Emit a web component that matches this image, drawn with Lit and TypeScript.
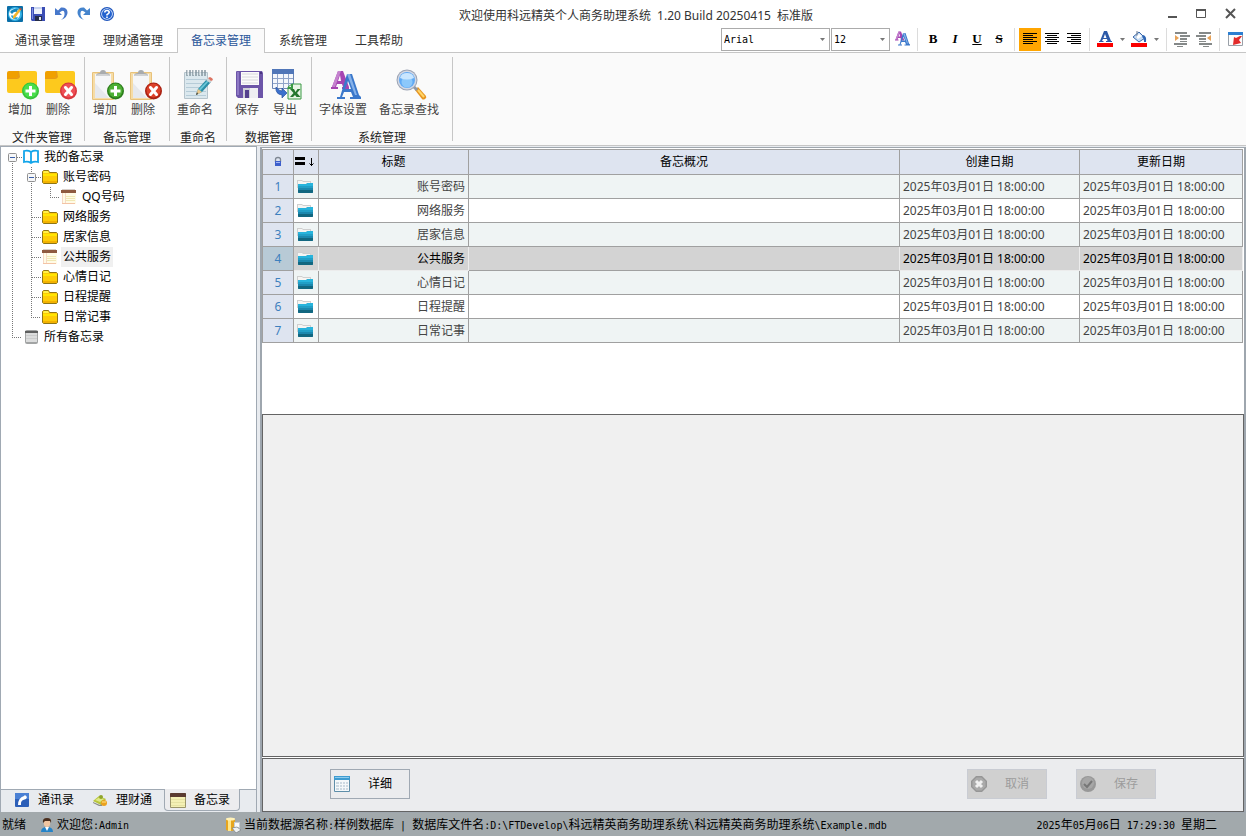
import { LitElement, html, svg, css, nothing } from "lit";
import { customElement, state } from "lit/decorators.js";
import { classMap } from "lit/directives/class-map.js";

type Art = ReturnType<typeof svg>;

const folder = svg`
  <path d="M0 4q0-2 2-2h9l4 3h0v6H0z" fill="#f0a000"/>
  <path d="M12 2h16q2 0 2 2v18q0 2-2 2H2q-2 0-2-2V9h9q2 0 3-2z" fill="#fdc91d"/>
  <path d="M12 2h-1v5q-1 2-2 2H0v1h10q2 0 3-2z" fill="#e79a17"/>`;
const board = svg`
  <rect x="0" y="3" width="22" height="28" rx="1" fill="#e8c27a"/>
  <rect x="1" y="4" width="20" height="26" fill="#f6dca6"/>
  <path d="M3 5h16v24H3z" fill="#f5f6f8"/>
  <path d="M3 29V14L17 29z" fill="#e6e8ec"/>
  <path d="M4 7q0-3 4-3 0-3 3-3t3 3q4 0 4 3z" fill="#a8abae"/>
  <path d="M4 7q0-2 4-2h6q4 0 4 2z" fill="#d0d2d4"/>`;
const plus = (a: string, b: string) => svg`
  <circle cx="23.500" cy="22" r="8.500" fill=${a}/><circle cx="23.500" cy="21.500" r="7" fill=${b}/>
  <path d="M18.500 22h10M23.500 17v10" stroke="#fff" stroke-width="3" fill="none"/>`;
const cross = (a: string, b: string) => svg`
  <circle cx="23.500" cy="22" r="8.500" fill=${a}/><circle cx="23.500" cy="21.500" r="7" fill=${b}/>
  <path d="M20.500 18.500l6 7M26.500 18.500l-6 7" stroke="#fff" stroke-width="3" fill="none" stroke-linecap="round"/>`;
const badged = (base: Art, badge: Art) => svg`<g transform="translate(3 0)">${base}${badge}</g>`;
const fontPair = svg`
  <path fill-rule="evenodd" d="M9 1h5l6 16v2h-7v-2h1l-1-3H8l-1 3h2v2H2v-2h1zM11 5L9 11h3z" fill="#a545b2"/>
  <path d="M9 1h3l-6 16H3z" fill="#c583cf"/>
  <path fill-rule="evenodd" d="M18 4h5l7 21 2 2v2h-11v-2h3l-2-5h-7l-2 5h3v2H8v-2h3zM19 11l-3 8h6z" fill="#3b78cb"/>
  <path d="M18 4h3l7 21h-2z" fill="#86b2ea"/>`;
const floppy = svg`
  <path d="M0 2q0-1 1-1h25l1 2v25H2l-2-2z" fill="#6c55a8"/>
  <path d="M1 2h2v23H1z" fill="#8d78c4"/>
  <path d="M5 2h18v13H5z" fill="#fbfbfb"/>
  <path d="M6 4h16M6 7h16M6 10h16M6 13h16" stroke="#d7d8dc"/>
  <path d="M7 18h15v10H7z" fill="#cfd0d8"/><path d="M14 18h8v10h-8z" fill="#eeeef2"/>
  <path d="M9 20h4v8H9z" fill="#55418e"/><path d="M24 2h2v2h-2z" fill="#493580"/>`;

const big: Record<string, Art> = {
  folderAdd: badged(folder, plus("#37c43a", "#4ade4c")),
  folderDel: badged(folder, cross("#d8363c", "#ee4f56")),
  noteAdd: badged(board, plus("#2c7d1c", "#4caf33")),
  noteDel: badged(board, cross("#a92213", "#dc4129")),
  rename: svg`<g transform="translate(2 0)">
    <rect x="3" y="3" width="24" height="27" rx="1" fill="#b5c3cb"/>
    <path d="M4 4h22v25H4z" fill="#dbe8ee"/>
    <path d="M5 10.500h20M5 14.500h20M5 18.500h20M5 22.500h20M5 26.500h20" stroke="#b6ccd8"/>
    <path d="M6 1v6M9 1v6M12 1v6M15 1v6M18 1v6M21 1v6M24 1v6" stroke="#84959f" stroke-width="1.500"/>
    <path d="M7 1v5M13 1v5M19 1v5" stroke="#f3f6f8"/>
    <path d="M15 26l2-6 9-10 4 3-9 10z" fill="#2b8fa8"/><path d="M18 20l9-9 1 1-9 10z" fill="#6cc7d8"/>
    <path d="M25 11l2-2 4 3-2 2z" fill="#cfd3d5"/><path d="M27 9l2-1q3 1 3 3l-2 1z" fill="#dc7463"/>
    <path d="M15 26l2-6 4 3z" fill="#ecc98e"/><path d="M15 26l1-3 1 2z" fill="#333"/></g>`,
  save: svg`<g transform="translate(5 1)">${floppy}</g>`,
  export: svg`<g transform="translate(1 0)">
    <path d="M2.500.5h21v19h-21z" fill="#f4f7fc" stroke="#6d86b5"/>
    <path d="M2 0h22v5H2z" fill="#5076b8"/>
    <path d="M3 9.500h20M3 14.500h20M7.500 5v15M13.500 5v15M18.500 5v15" stroke="#90a4c9"/>
    <path d="M18 18l4-3h9v15H18z" fill="#e9f5e6" stroke="#3a9a44"/>
    <path d="M18 19h4v-4" fill="none" stroke="#3a9a44" stroke-width="2"/>
    <path d="M20 20h4l1.500 3 2-3h3l-3.500 4 3.500 4h-4l-1.500-2-2 2h-3l3.500-4z" fill="#24772d"/>
    <path d="M6 18q-1 7 6 8v3l5-5-5-5v3q-3 0-6-4z" fill="#3b70cd" stroke="#2a519d" stroke-width=".7"/></g>`,
  fonts: svg`<g transform="translate(2 1)">${fontPair}</g>`,
  find: svg`<g transform="translate(1 0)">
    <path d="M21 21l3-3 8 9q1 2-1 3t-3 0z" fill="#e79521"/>
    <path d="M24 21l6 7" stroke="#ffd568" stroke-width="2"/>
    <path d="M19 17l4 4" stroke="#8f98a6" stroke-width="3"/>
    <circle cx="13" cy="11" r="10.500" fill="#9ba3b3"/><circle cx="13" cy="11" r="9.500" fill="#d3d8e4"/>
    <circle cx="13" cy="11" r="8" fill="#5fa9f5"/><circle cx="13" cy="13" r="5.500" fill="#8cc8fb"/>
    <path d="M6 9q1-5 7-5t7 5q-7 3-14 0z" fill="#c9e6ff"/></g>`,
};

const small: Record<string, Art> = {
  app: svg`
    <rect width="16" height="16" rx="1" fill="#0a6fa8"/><circle cx="8" cy="8" r="7" fill="#36b5e8"/>
    <circle cx="7.500" cy="8" r="5.500" fill="#fff"/><path d="M3 6q3-4 8-3l-1 3q-3-1-5 2z" fill="#1687bd"/>
    <path d="M4 10q2 4 6 3l1-2q-4 1-6-2z" fill="#2aa5da"/>
    <path d="M6 10l6-7 2 1-6 8-2 1z" fill="#f4b52c"/><path d="M12 3l1-1 2 1-1 1z" fill="#d84b2c"/>`,
  save: svg`
    <path d="M1 1h14v14H2l-1-1z" fill="#3b4db4"/><path d="M2 2h1v11H2z" fill="#7f8fe2"/>
    <path d="M4 1h8v7H4z" fill="#eef2fb"/><path d="M4 1h8v2H4z" fill="#c8d4f0"/>
    <path d="M5 10h7v5H5z" fill="#252d49"/><path d="M9 11h2v3H9z" fill="#dfe3ee"/>`,
  undo: svg`
    <path d="M2 2v7h7L6.500 6.500Q11 3 11.500 7T8 14q7-3 6.500-8T8 1.500L5 4.500z" fill="#4778cb"/>`,
  redo: svg`
    <path d="M14 2v7H7l2.500-2.500Q5 3 4.500 7T8 14Q1 11 1.500 6T8 1.500L11 4.500z" fill="#4584cd"/>`,
  help: svg`
    <circle cx="8" cy="8" r="7" fill="#1f56bd"/><circle cx="8" cy="8" r="5.800" fill="#e5efff"/>
    <circle cx="8" cy="8" r="5" fill="#2463cf"/>
    <path d="M5.800 6.500q0-2 2.200-2t2.200 1.800Q10 7.500 8 8.600v.9" stroke="#fff" stroke-width="1.600" fill="none"/>
    <path d="M7.200 10.500h1.600v1.500H7.200z" fill="#fff"/>`,
  fonts: svg`<g transform="scale(.5)">${fontPair}</g>`,
  left: svg`<path d="M1 2.500h14M1 4.500h10M1 6.500h14M1 8.500h10M1 10.500h14M1 12.500h10" stroke="#000"/>`,
  center: svg`<path d="M1 2.500h14M3 4.500h10M1 6.500h14M3 8.500h10M1 10.500h14M3 12.500h10" stroke="#000"/>`,
  right: svg`<path d="M1 2.500h14M5 4.500h10M1 6.500h14M5 8.500h10M1 10.500h14M5 12.500h10" stroke="#000"/>`,
  color: svg`
    <path fill-rule="evenodd" d="M7 0h3l4 10h1v1H9v-1h1.500L10 8H6l-1 2h1.500v1H2v-1h1zM8 3L6.500 7h3z" fill="#2c5aa8"/>
    <path d="M0 12h16v4H0z" fill="#fa0000"/>`,
  fill: svg`
    <path d="M2 6l6-5 6 6-6 4z" fill="#c6dcf4" stroke="#3a67a8"/><path d="M6 0v7" stroke="#6b7a90"/>
    <path d="M12 4q4 1 3 7h-2q0-4-2-5z" fill="#2e65b4"/><path d="M5 6l3-3 3 2-4 3z" fill="#fff"/>
    <path d="M0 12h16v4H0z" fill="#fa0000"/>`,
  indent: svg`
    <path d="M1 1h12v2H1zM6 4h10v2H6zM6 7h7v2H6zM6 10h7v1H6zM0 12h13v2H0zM3 15h6v1H3z" fill="#858989"/>
    <path d="M1 4l4 3-4 3z" fill="#e7a258"/>`,
  outdent: svg`
    <path d="M3 1h12v2H3zM0 4h10v2H0zM3 7h7v2H3zM3 10h7v1H3zM3 12h13v2H3zM7 15h6v1H7z" fill="#858989"/>
    <path d="M15 4l-4 3 4 3z" fill="#e7a258"/>`,
  jump: svg`
    <path d="M1.500 1.500h14v13h-14z" fill="#fdfdfd" stroke="#9aa0a8"/><path d="M1 1h15v3H1z" fill="#2d7fd1"/>
    <path d="M15 5l-3 4 2 3-8 2 1-8 2 1 4-2z" fill="#e22b2b"/>`,
  book: svg`
    <path d="M1 2q4-1 7 1 3-2 7-1v11q-4-1-7 1-3-2-7-1zM8 3v11" fill="#fff" stroke="#12a5ea" stroke-width="1.800"/>`,
  folder: svg`
    <path d="M.5 2.500l1-1h5l1 2h7l1 1v9l-1 1h-13l-1-1z" fill="#ffcb05" stroke="#8f7616"/>
    <path d="M1 5h14v2H1z" fill="#ffe600"/><path d="M2 2h4l1 2H1z" fill="#fff04a"/><path d="M1 12h14v2H1z" fill="#f2b200"/>`,
  note: svg`
    <path d="M1 3h14v12H1z" fill="#fffbe6"/><path d="M0 1h15v3H0z" fill="#8e5a40"/><path d="M1 0h13v1H1z" fill="#d8cfc9"/>
    <path d="M1.500 4v11M4.500 4v11" stroke="#f6d9c6"/><path d="M5 7.500h9M5 9.500h9M5 11.500h9" stroke="#f0e8b4"/>
    <path d="M1 14.500h13" stroke="#f4c4a6"/>`,
  all: svg`
    <rect x="2" y="1" width="13" height="14" rx="2" fill="#a2a4a4"/><path d="M3 4h11v9H3z" fill="#dcdddd"/>
    <path d="M2 2h13v2H2z" fill="#5e5f5f"/><path d="M3 6.500h11M3 9.500h11" stroke="#cbcccc"/>`,
  teal: svg`
    <path d="M0 1h5l1 1h8v7H0z" fill="#cfcfcf"/><path d="M1 2h4l1 1h7v7H1z" fill="#f5f5f3"/>
    <path d="M1 5h8l2-1h5v9q0 1-1 1H2q-1 0-1-1z" fill="#1c88ae"/><path d="M1 5h8l2-1h5v3H1z" fill="#28b4dc"/>
    <path d="M1 7h15v2H1z" fill="#229fc6"/><path d="M1 11h15v2q0 1-1 1H2q-1 0-1-1z" fill="#126780"/>`,
  lock: svg`
    <path d="M5.500 8V5.500q0-2 2.500-2t2.500 2V8" fill="none" stroke="#7e8793" stroke-width="1.300"/>
    <rect x="5" y="7" width="6" height="5" fill="#3d5fcb"/><path d="M6 8h4v1H6z" fill="#9fb4f4"/>`,
  phone: svg`
    <rect x="1" y="1" width="14" height="14" rx="1" fill="#2c5fb8"/><path d="M1 1h14v6H1z" fill="#4a80d4"/>
    <path d="M4 13q0-7 6-9l1-1 2 2-1 2q-5 1-5 4l0 2z" fill="#fff"/>`,
  money: svg`
    <path d="M1 9l6-5 7 3-5 6z" fill="#b7c53a"/><path d="M3 8l5-3 4 2-4 3z" fill="#dfe886"/><circle cx="9" cy="5" r="2" fill="#8fa52b"/>
    <path d="M1 10l7 3 3-2-1 3H7l-6-3z" fill="#8b8d84"/><circle cx="12" cy="11" r="3" fill="#eaa11d"/><path d="M10 10h4" stroke="#ffe58b"/>`,
  memo: svg`
    <rect y="1" width="16" height="15" rx="1" fill="#9b9569"/><path d="M1 5h14v10H1z" fill="#f4f0b4"/>
    <path d="M0 2q0-1 1-1h14q1 0 1 1v3H0z" fill="#5a3a30"/><path d="M1 7.500h14M1 10.500h14M1 13.500h14" stroke="#e6e2a2"/>`,
  user: svg`
    <path d="M2 15q0-5 6-5t6 5z" fill="#2483c8"/><path d="M6 10h4l-2 4z" fill="#fff"/>
    <ellipse cx="8" cy="6" rx="3.200" ry="4" fill="#f1c5a0"/><path d="M4 6q-1-5 4-5t4 5l-1-2H6z" fill="#4b2e1d"/>`,
  data: svg`
    <path d="M0 2h9v11q-4 2-9 0z" fill="#e6a51e"/><path d="M2 2h3v12H2z" fill="#ffe68a"/><ellipse cx="4.500" cy="2" rx="4.500" ry="1.500" fill="#fff2b8"/>
    <path d="M8 5h6v9H8z" fill="#c7cdd2"/><path d="M9 6h4v4H9z" fill="#f9fafa"/><path d="M6 11l5-1 4 3-5 3z" fill="#eef1f3" stroke="#777e83" stroke-width=".7"/>`,
  sheet: svg`
    <path d="M.5.5h15v15H.5z" fill="#f4f8fa" stroke="#5e8ea9"/><path d="M0 0h16v4H0z" fill="#3d9bd0"/><path d="M1 1h14v1H1z" fill="#8ccbee"/>
    <path d="M2 6h12v8H2z" fill="#cdd9e2"/><path d="M5.500 6v8M8.500 6v8M11.500 6v8M2 8.500h12M2 11.500h12" stroke="#f4f8fa"/>`,
  cancel: svg`
    <path d="M5 0h6l5 5v6l-5 5H5l-5-5V5z" fill="#969696"/><path d="M5.500 1.500h5l4 4v5l-4 4h-5l-4-4v-5z" fill="#aaa"/>
    <path d="M5 5l6 6M11 5l-6 6" stroke="#f0f0f0" stroke-width="3"/>`,
  ok: svg`
    <circle cx="8" cy="8" r="8" fill="#989898"/><circle cx="8" cy="7" r="6" fill="#a6a6a6"/>
    <path d="M4 8l3 3 5-6" stroke="#777" stroke-width="2" fill="none"/>`,
};

const icon = (name: string) => html`<svg class="i16" viewBox="0 0 16 16" aria-hidden="true">${small[name]}</svg>`;
const bigIcon = (name: string) => html`<svg class="i32" viewBox="0 0 32 32" aria-hidden="true">${big[name]}</svg>`;

/** Sets the Latin runs of a mixed string in the half-width face. */
const mixed = (text: string) =>
  text.split(/([\x20-\x7e]+)/).map((run) => (/^[\x20-\x7e]+$/.test(run) ? html`<span class="half">${run}</span>` : run));

const RIBBON = [
  { name: "文件夹管理", items: [["folderAdd", "增加"], ["folderDel", "删除"]] },
  { name: "备忘管理", items: [["noteAdd", "增加"], ["noteDel", "删除"]] },
  { name: "重命名", items: [["rename", "重命名"]] },
  { name: "数据管理", items: [["save", "保存"], ["export", "导出"]] },
  { name: "系统管理", items: [["fonts", "字体设置"], ["find", "备忘录查找"]] },
];

/** Guides, one letter per column: o/O root and inner expander, v line, t branch, l last branch. */
const TREE: [string, string, string][] = [
  ["o", "book", "我的备忘录"],
  ["vO", "folder", "账号密码"],
  ["vvl", "note", "QQ号码"],
  ["vt", "folder", "网络服务"],
  ["vt", "folder", "居家信息"],
  ["vt", "note", "公共服务"],
  ["vt", "folder", "心情日记"],
  ["vt", "folder", "日程提醒"],
  ["vl", "folder", "日常记事"],
  ["l", "all", "所有备忘录"],
];
const GUIDE: Record<string, string> = {
  o: "M9.500 14v6M14 10.500h6",
  O: "M9.500 0v6M9.500 14v6M14 10.500h6",
  v: "M9.500 0v20",
  t: "M9.500 0v20M10 10.500h10",
  l: "M9.500 0v10M9 10.500h11",
};

const TITLES = ["账号密码", "网络服务", "居家信息", "公共服务", "心情日记", "日程提醒", "日常记事"];
const STAMP = "2025年03月01日 18:00:00";

@customElement("app-root")
export class AppRoot extends LitElement {
  @state() private current = "公共服务";
  @state() private tab = "备忘录管理";

  static styles = css`
    :host {
      display: flex;
      flex-direction: column;
      height: 100vh;
      box-sizing: border-box;
      background: #fff;
      color: #000;
      font: 12px/16px "Noto Sans", "Noto Sans CJK SC", sans-serif;
      overflow: hidden;
    }
    * { box-sizing: border-box; }
    button, select, textarea { font: inherit; color: inherit; margin: 0; padding: 0; border: 0; background: none; border-radius: 0; }
    .i16 { width: 16px; height: 16px; flex: none; display: block; }
    .i32 { width: 32px; height: 32px; flex: none; display: block; overflow: visible; }
    .half { font: 10px/16px "DejaVu Sans Mono", monospace; white-space: pre; }

    .titlebar { display: flex; align-items: center; height: 28px; padding: 0 2px 0 4px; flex: none; }
    .quick { display: flex; gap: 7px; padding-left: 3px; }
    .title { flex: 1; margin: 0; padding-top: 3px; text-align: center; font: inherit; color: #333; white-space: pre; }
    .win { display: flex; }
    .win button { width: 29px; height: 26px; display: grid; place-items: center; }

    .bar { display: flex; height: 25px; flex: none; border-bottom: 1px solid #c6c6c6; }
    .menu { display: flex; padding-left: 1px; }
    .menu button { padding: 0 13px; border: 1px solid transparent; border-bottom: 0; height: 24px; color: #333; white-space: nowrap; }
    .menu .on { height: 25px; background: #fafafa; border-color: #c6c6c6; color: #2b579a; padding-bottom: 1px; }
    .format { display: flex; margin-left: auto; height: 23px; align-items: stretch; }
    .format select {
      appearance: none;
      border: 1px solid #ababab;
      margin-right: 1px;
      padding-left: 2px;
      font: 10px/16px "DejaVu Sans Mono", monospace;
      background: url("data:image/svg+xml,%3Csvg xmlns='http://www.w3.org/2000/svg' width='5' height='3'%3E%3Cpath d='M0 0h5L2.5 3z' fill='%23777'/%3E%3C/svg%3E") no-repeat right 4px center;
    }
    .family { width: 109px; }
    .size { width: 59px; }
    .format button { width: 22px; padding-bottom: 1px; display: grid; place-items: center; font: 700 13px/20px "Liberation Serif", serif; }
    .format .caret { width: 12px; }
    .format .on { background: #ffa500; }
    .format .italic { font-style: italic; }
    .format .under { text-decoration: underline; }
    .format .strike { text-decoration: line-through; }
    .sep { width: 1px; margin: 0 4px; background: #dcdcdc; }

    .ribbon { display: flex; height: 93px; padding: 4px 0; flex: none; background: #fafafa; border-bottom: 1px solid #c6c6c6; }
    .group { display: flex; flex-direction: column; justify-content: space-between; padding: 12px 7px 0 1px; border-right: 1px solid #c6c6c6; }
    .tools { display: flex; }
    .tools button { min-width: 38px; display: flex; flex-direction: column; align-items: center; color: #444; white-space: nowrap; }
    .tools span { padding: 1px 6px 0; }
    .caption { text-align: center; height: 11px; padding-left: 6px; color: #222; }

    .main { display: flex; flex: 1; min-height: 0; background: #e8ebef; border-bottom: 1px solid #a2a9ac; }
    .side { display: flex; flex-direction: column; width: 257px; flex: none; border: 1px solid #a0a9b3; border-bottom: 0; }
    .tree { flex: 1; margin: 0; padding: 0 0 0 2px; list-style: none; background: #fff; }
    .tree li { display: flex; height: 20px; align-items: center; }
    .guide { width: 19px; height: 20px; flex: none; }
    .tree .i16 { margin: 0 3px 0 1px; }
    .node { height: 20px; padding: 0 2px; }
    .node.on { background: #f0f0f0; }
    .pages { display: flex; height: 23px; flex: none; padding-left: 7px; background: linear-gradient(#a0a9b3, #a0a9b3) 0 0 / 100% 1px no-repeat #e8ebef; }
    .pages button { display: flex; align-items: center; gap: 8px; width: 78px; padding: 0 5px; height: 22px; border: 1px solid transparent; border-top: 0; white-space: nowrap; }
    .pages .on { width: 76px; background: #ececee; border-color: #a0a9b3; border-radius: 0 0 4px 4px; }

    .work {
      display: grid;
      grid-template-rows: 266px minmax(60px, 1fr) 55px;
      flex: 1;
      min-width: 0;
      margin: 1px 0 -1px 3px;
      border: solid #9ea6ae;
      border-width: 1px 2px;
      background: #fff;
    }
    .grid { padding: 1px 1px 0 0; overflow: hidden; }
    table { width: 100%; table-layout: fixed; border-spacing: 0; border: solid #a0a0a0; border-width: 1px 0 0 1px; }
    th, td { height: 24px; padding: 0 3px; border: solid #a0a0a0; border-width: 0 1px 1px 0; font-weight: 400; line-height: 16px; white-space: nowrap; overflow: hidden; }
    thead th { height: 25px; background: #dee4f0; text-align: center; }
    thead svg { display: block; margin: 0 auto; }
    .c-num { width: 31px; }
    .c-icon { width: 25px; }
    .c-title { width: 150px; }
    .c-made { width: 180px; }
    .c-mod { width: 163px; }
    td { color: #444; }
    tbody tr:nth-child(odd) td { background: #eff4f4; }
    tbody th { background: #dee4f0; color: #3d80be; }
    .mark .i16, .lock .i16 { margin: 0 auto; }
    .mark { padding: 0 2px 0 0; }
    .name { text-align: right; }
    tbody tr.on td { background: #d3d3d3; color: #000; border-color: #ececec; }
    tbody tr.on .memo { border-color: #a0a0a0; border-right-color: #ececec; }
    tbody tr.on th { background: #b8cad6; }

    textarea { display: block; width: 100%; height: 100%; resize: none; outline: 0; background: #f0f0f0; border: 1px solid #646464; }
    .actions { display: flex; align-items: center; gap: 29px; margin-top: 1px; padding: 0 87px 2px 67px; background: #ebecee; border: 1px solid #646464; }
    .actions button { display: flex; align-items: center; width: 80px; height: 30px; padding: 0 3px; gap: 18px; border: 1px solid #a0a9b3; }
    .actions button:disabled { background: #d0d0d0; border-color: #c9ccd3; color: #9c9c9c; }
    .push { margin-left: auto; }

    .status { display: flex; align-items: center; height: 23px; flex: none; padding: 1px 29px 0 2px; background: #a2a9ac; white-space: nowrap; }
    .status span.cell { display: flex; align-items: center; gap: 2px; }
    .ready { width: 37px; }
    .who { width: 187px; }
    .clock { margin-left: auto; }
  `;

  private tool(cls: string, label: string, body: unknown) {
    return html`<button class=${cls} aria-label=${label}>${body}</button>`;
  }

  private caret(label: string) {
    return this.tool("caret", label, html`<svg width="5" height="3" viewBox="0 0 5 3"><path d="M0 0h5L2.500 3z" fill="#777"/></svg>`);
  }

  private guide(kind: string) {
    const box = kind === "o" || kind === "O";
    return html`<svg class="guide" viewBox="0 0 19 20" aria-hidden="true">
      <path d=${GUIDE[kind]} stroke="#777" stroke-dasharray="1 1" fill="none" />
      ${box
        ? svg`<rect x="5.500" y="6.500" width="8" height="8" rx="1" fill="#f6f7f8" stroke="#919191"/><path d="M7 10.500h5" stroke="#3a5fa9"/>`
        : nothing}
    </svg>`;
  }

  private header() {
    return html`
      <header class="titlebar">
        <div class="quick">
          ${[["app", "程序菜单"], ["save", "保存"], ["undo", "撤销"], ["redo", "重做"], ["help", "帮助"]].map(([i, l]) => this.tool("", l, icon(i)))}
        </div>
        <h1 class="title">欢迎使用科远精英个人商务助理系统  1.20 Build 20250415  标准版</h1>
        <div class="win">
          ${this.tool("", "最小化", html`<svg width="12" height="12"><path d="M2 8h9v2H2z" fill="#555"/></svg>`)}
          ${this.tool("", "最大化", html`<svg width="12" height="12"><path d="M1.500 1.500h9v8h-9z" fill="none" stroke="#555"/><path d="M1 1h10v2H1z" fill="#555"/></svg>`)}
          ${this.tool("", "关闭", html`<svg width="12" height="12"><path d="M2 1l9 9M11 1l-9 9" stroke="#555" stroke-width="2"/></svg>`)}
        </div>
      </header>
      <div class="bar">
        <nav class="menu">
          ${["通讯录管理", "理财通管理", "备忘录管理", "系统管理", "工具帮助"].map(
            (t) => html`<button class=${classMap({ on: t === this.tab })} @click=${() => (this.tab = t)}>${t}</button>`
          )}
        </nav>
        <div class="format">
          <select class="family" aria-label="字体"><option>Arial</option></select>
          <select class="size" aria-label="字号"><option>12</option></select>
          ${this.tool("", "字体设置", icon("fonts"))}
          <span class="sep"></span>
          ${this.tool("", "加粗", "B")}${this.tool("italic", "倾斜", "I")}${this.tool("under", "下划线", "U")}${this.tool("strike", "删除线", "S")}
          <span class="sep"></span>
          ${this.tool("on", "左对齐", icon("left"))}${this.tool("", "居中", icon("center"))}${this.tool("", "右对齐", icon("right"))}
          <span class="sep"></span>
          ${this.tool("", "文字颜色", icon("color"))}${this.caret("选择文字颜色")}${this.tool("", "填充颜色", icon("fill"))}${this.caret("选择填充颜色")}
          <span class="sep"></span>
          ${this.tool("", "增加缩进", icon("indent"))}${this.tool("", "减少缩进", icon("outdent"))}
          <span class="sep"></span>
          ${this.tool("", "弹出", icon("jump"))}
        </div>
      </div>
      <div class="ribbon">
        ${RIBBON.map(
          (g) => html`<section class="group">
            <div class="tools">${g.items.map(([i, l]) => html`<button>${bigIcon(i)}<span>${l}</span></button>`)}</div>
            <div class="caption">${g.name}</div>
          </section>`
        )}
      </div>`;
  }

  private table() {
    return html`<table>
      <thead>
        <tr>
          <th class="c-num lock" aria-label="锁定">${icon("lock")}</th>
          <th class="c-icon mark" aria-label="类型">
            <svg width="22" height="12" viewBox="0 0 22 12"><path d="M1 1h10v3H1zM1 6h10v3H1z"/><path d="M17.500 2v8M15.500 7.500l2 2 2-2" fill="none" stroke="#000"/></svg>
          </th>
          <th class="c-title">标题</th>
          <th>备忘概况</th>
          <th class="c-made">创建日期</th>
          <th class="c-mod">更新日期</th>
        </tr>
      </thead>
      <tbody>
        ${TITLES.map(
          (t, n) => html`<tr class=${classMap({ on: t === this.current })} @click=${() => (this.current = t)}>
            <th>${n + 1}</th>
            <td class="mark">${icon("teal")}</td>
            <td class="name">${t}</td>
            <td class="memo"></td>
            <td>${STAMP}</td>
            <td>${STAMP}</td>
          </tr>`
        )}
      </tbody>
    </table>`;
  }

  render() {
    return html`
      ${this.header()}
      <main class="main">
        <aside class="side">
          <ul class="tree">
            ${TREE.map(
              ([g, i, t]) => html`<li>
                ${[...g].map((k) => this.guide(k))}${icon(i)}<button class=${classMap({ node: true, on: t === this.current })} @click=${() => (this.current = t)}>${t}</button>
              </li>`
            )}
          </ul>
          <div class="pages">
            <button>${icon("phone")}通讯录</button>
            <button>${icon("money")}理财通</button>
            <button class="on">${icon("memo")}备忘录</button>
          </div>
        </aside>
        <section class="work">
          <div class="grid">${this.table()}</div>
          <textarea readonly aria-label="备忘内容"></textarea>
          <div class="actions">
            <button>${icon("sheet")}详细</button>
            <button class="push" disabled>${icon("cancel")}取消</button>
            <button disabled>${icon("ok")}保存</button>
          </div>
        </section>
      </main>
      <footer class="status">
        <span class="ready">就绪</span>
        <span class="cell who">${icon("user")}<span>${mixed("欢迎您:Admin")}</span></span>
        <span class="cell">${icon("data")}<span>${mixed("当前数据源名称:样例数据库 | 数据库文件名:D:\\FTDevelop\\科远精英商务助理系统\\科远精英商务助理系统\\Example.mdb")}</span></span>
        <span class="clock">${mixed("2025年05月06日 17:29:30 星期二")}</span>
      </footer>`;
  }
}
